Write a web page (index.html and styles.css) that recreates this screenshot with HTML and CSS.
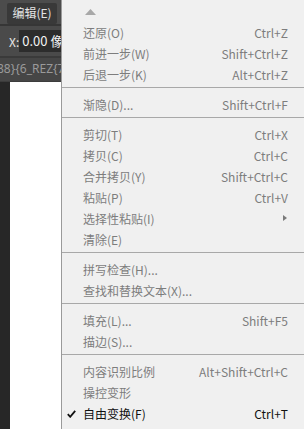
FILE: index.html
```html
<!DOCTYPE html>
<html lang="zh-CN">

<head>
    <meta charset="UTF-8">
    <title>编辑菜单</title>
    <link rel="stylesheet" href="styles.css">
</head>

<body>
    <div class="side">
        <div class="menubar">
            <span class="menubar-btn">编辑(E)</span>
        </div>
        <div class="options">
            <span class="grip"></span>
            <span class="opt-label">X:</span>
            <span class="opt-input">0.00 像</span>
        </div>
        <div class="tabs">
            <span class="tab-name">88}{6_REZ{7</span>
        </div>
        <div class="doc">
            <div class="doc-edge"></div>
            <div class="doc-canvas"></div>
        </div>
    </div>

    <div class="menu">
        <div class="scroll-up">
            <svg width="11" height="6" viewBox="0 0 11 6"><path d="M0 6 L5.5 0 L11 6 Z" fill="#a8a8a8"/></svg>
        </div>

        <div class="item off"><span>还原(O)</span><span>Ctrl+Z</span></div>
        <div class="item off"><span>前进一步(W)</span><span>Shift+Ctrl+Z</span></div>
        <div class="item off"><span>后退一步(K)</span><span>Alt+Ctrl+Z</span></div>
        <div class="sep"></div>
        <div class="item off"><span>渐隐(D)...</span><span>Shift+Ctrl+F</span></div>
        <div class="sep"></div>
        <div class="item off"><span>剪切(T)</span><span>Ctrl+X</span></div>
        <div class="item off"><span>拷贝(C)</span><span>Ctrl+C</span></div>
        <div class="item off"><span>合并拷贝(Y)</span><span>Shift+Ctrl+C</span></div>
        <div class="item off"><span>粘贴(P)</span><span>Ctrl+V</span></div>
        <div class="item off"><span>选择性粘贴(I)</span><span class="sub-arrow"></span></div>
        <div class="item off"><span>清除(E)</span><span></span></div>
        <div class="sep"></div>
        <div class="item off"><span>拼写检查(H)...</span><span></span></div>
        <div class="item off"><span>查找和替换文本(X)...</span><span></span></div>
        <div class="sep"></div>
        <div class="item off"><span>填充(L)...</span><span>Shift+F5</span></div>
        <div class="item off"><span>描边(S)...</span><span></span></div>
        <div class="sep"></div>
        <div class="item off"><span>内容识别比例</span><span>Alt+Shift+Ctrl+C</span></div>
        <div class="item off"><span>操控变形</span><span></span></div>
        <div class="item checked">
            <svg class="check" width="9" height="8" viewBox="0 0 9 8"><path d="M0.8 4.2 L3.2 6.8 L8.2 0.8" fill="none" stroke="#111" stroke-width="1.8"/></svg>
            <span>自由变换(F)</span><span>Ctrl+T</span>
        </div>
    </div>
</body>

</html>
```

FILE: styles.css
```css
body {
    margin: 0;
    padding: 0;
    width: 304px;
    height: 429px;
    overflow: hidden;
    display: flex;
    font-family: "Noto Sans CJK SC", "Noto Sans", sans-serif;
    font-size: 12px;
    background-color: #262626;
}

/* left: photoshop workspace peeking out */
.side {
    width: 61px;
    display: flex;
    flex-direction: column;
    overflow: hidden;
}

.menubar {
    height: 26px;
    background-color: #4c4c4c;
    border-bottom: 2px solid #363636;
    padding: 3px 0 0 7px;
    box-sizing: border-box;
}

.menubar-btn {
    display: inline-block;
    width: 50px;
    height: 21px;
    line-height: 20px;
    text-align: center;
    color: #e4e4e4;
    background-color: #393939;
    border-radius: 2px;
}

.options {
    height: 30px;
    background-color: #4a4a4a;
    display: flex;
    align-items: center;
    border-bottom: 2px solid #3a3a3a;
}

.grip {
    width: 3px;
    height: 18px;
    margin-right: 9px;
    background-color: #2a2a2a;
}

.opt-label {
    color: #e6e6e6;
    width: 14px;
}

.opt-input {
    height: 22px;
    line-height: 21px;
    padding-left: 3px;
    flex: 1;
    white-space: nowrap;
    color: #f2f2f2;
    background-color: #2c2c2c;
    font-size: 13px;
}

.tabs {
    height: 23px;
    background-color: #464646;
    border-bottom: 1px solid #3c3c3c;
    overflow: hidden;
    white-space: nowrap;
}

.tab-name {
    display: inline-block;
    margin-left: -3px;
    line-height: 22px;
    font-size: 12px;
    color: #9a9a9a;
    font-family: "Noto Sans", sans-serif;
}

.doc {
    flex: 1;
    display: flex;
}

.doc-edge {
    width: 10px;
    background-color: #272727;
}

.doc-canvas {
    flex: 1;
    background-color: #ffffff;
}

/* the drop-down */
.menu {
    flex: 1;
    background-color: #f0f0f0;
    border-left: 1px solid #9a9a9a;
}

.scroll-up {
    height: 22px;
    padding: 9px 0 0 23px;
    box-sizing: border-box;
}

.scroll-up svg {
    display: block;
}

.item {
    position: relative;
    height: 21px;
    line-height: 21px;
    padding: 0 16px 0 21px;
    display: flex;
    justify-content: space-between;
    white-space: nowrap;
}

.item.off {
    color: #7d7d7d;
}

.item.checked {
    color: #111111;
}

.check {
    position: absolute;
    left: 5px;
    top: 7px;
}

.sub-arrow {
    width: 0;
    height: 0;
    margin: 7px 1px 0 0;
    border-top: 3.5px solid transparent;
    border-bottom: 3.5px solid transparent;
    border-left: 4px solid #7a7a7a;
}

.sep {
    height: 1px;
    margin: 2px 0 6px 0;
    background-color: #a8a8a8;
}
```
